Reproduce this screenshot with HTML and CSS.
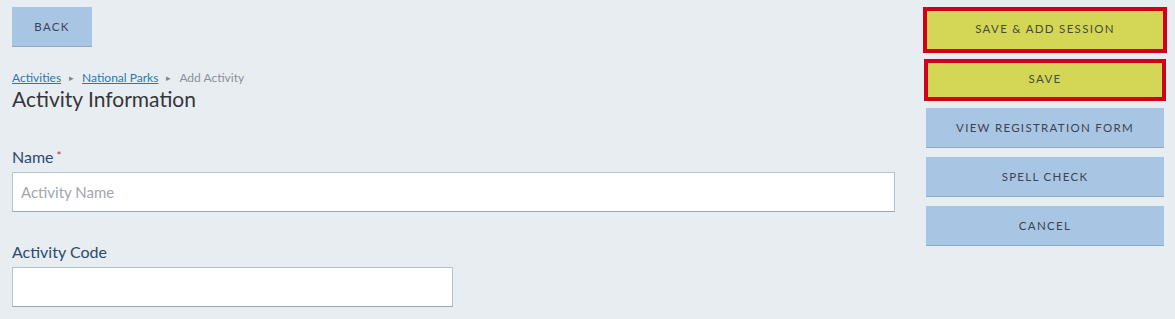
FILE: index.html
```html
<!DOCTYPE html>
<html lang="en">
<head>
<meta charset="utf-8">
<title>Add Activity</title>
<link rel="stylesheet" href="styles.css">
</head>
<body>
<div class="page">
  <main class="main">
    <button class="btn btn-back" type="button">BACK</button>
    <nav class="crumbs">
      <a href="#" class="crumb-link">Activities</a>
      <span class="sep">&#9656;</span>
      <a href="#" class="crumb-link">National Parks</a>
      <span class="sep">&#9656;</span>
      <span class="crumb-current">Add Activity</span>
    </nav>
    <h1 class="title">Activity Information</h1>
    <div class="field field-name">
      <label class="label">Name<span class="req">*</span></label>
      <input class="input input-wide" type="text" placeholder="Activity Name">
    </div>
    <div class="field field-code">
      <label class="label">Activity Code</label>
      <input class="input input-half" type="text">
    </div>
  </main>
  <aside class="side">
    <button class="btn btn-hl btn-hl-1" type="button">SAVE &amp; ADD SESSION</button>
    <button class="btn btn-hl btn-hl-2" type="button">SAVE</button>
    <button class="btn btn-side" type="button">VIEW REGISTRATION FORM</button>
    <button class="btn btn-side" type="button">SPELL CHECK</button>
    <button class="btn btn-side" type="button">CANCEL</button>
  </aside>
</div>
</body>
</html>
```

FILE: styles.css
```css
html, body {
  margin: 0;
  padding: 0;
  background: #e8edf2;
  font-family: Lato, "Open Sans", Arial, sans-serif;
  height: 100%;
  overflow: hidden;
}
.page {
  display: flex;
  align-items: flex-start;
  padding: 0 8px 0 12px;
}
.main {
  width: 883px;
  display: flex;
  flex-direction: column;
  align-items: flex-start;
}
.btn {
  font-family: Lato, "Open Sans", Arial, sans-serif;
  font-size: 11.5px;
  letter-spacing: 1.3px;
  color: #3d4256;
  border: 0;
  padding: 0;
  cursor: pointer;
  text-align: center;
}
.btn-back {
  margin-top: 7px;
  width: 80px;
  height: 40px;
  background: #a8c6e4;
  border-bottom: 1px solid #8ca9c6;
}
.crumbs {
  margin-top: 22px;
  font-size: 12px;
  line-height: 16px;
  display: flex;
  align-items: center;
  gap: 6px;
}
.crumb-link {
  color: #2a79a9;
  text-decoration: underline;
}
.sep {
  color: #7d8590;
  font-size: 9px;
  margin: 1px 2px 0 2px;
}
.crumb-current {
  color: #8b9098;
}
.title {
  margin: 0;
  font-weight: 400;
  font-size: 21px;
  line-height: 26px;
  color: #34363a;
}
.field {
  display: flex;
  flex-direction: column;
  align-items: flex-start;
}
.field-name { margin-top: 35px; }
.field-code { margin-top: 30px; }
.label {
  font-size: 16px;
  line-height: 20px;
  color: #2b4a6e;
  margin-bottom: 5px;
}
.req {
  color: #c2314a;
  font-size: 12px;
  vertical-align: top;
  margin-left: 3px;
  line-height: 18px;
}
.input {
  box-sizing: border-box;
  height: 40px;
  background: #ffffff;
  border: 1px solid #b3c1d0;
  border-bottom-color: #9aa9b9;
  font-family: Lato, "Open Sans", Arial, sans-serif;
  font-size: 15px;
  padding: 0 8px;
  margin: 0;
  outline: none;
}
.input::placeholder { color: #a3a7ad; }
.input-wide { width: 883px; }
.input-half { width: 441px; }
.side {
  margin-left: 28px;
  width: 244px;
  display: flex;
  flex-direction: column;
  align-items: center;
}
.btn-hl {
  box-sizing: border-box;
  background: #d4d655;
  border: 4px solid #d0021b;
  color: #4a4a3c;
}
.btn-hl-1 {
  margin-top: 7px;
  width: 244px;
  height: 46px;
  padding-bottom: 3px;
}
.btn-hl-2 {
  margin-top: 6px;
  width: 242px;
  height: 42px;
  padding-bottom: 3px;
}
.btn-side {
  width: 238px;
  height: 40px;
  background: #a8c6e4;
  border-bottom: 1px solid #8ca9c6;
  margin-top: 9px;
}
.btn-hl-2 + .btn-side { margin-top: 7px; }
```
